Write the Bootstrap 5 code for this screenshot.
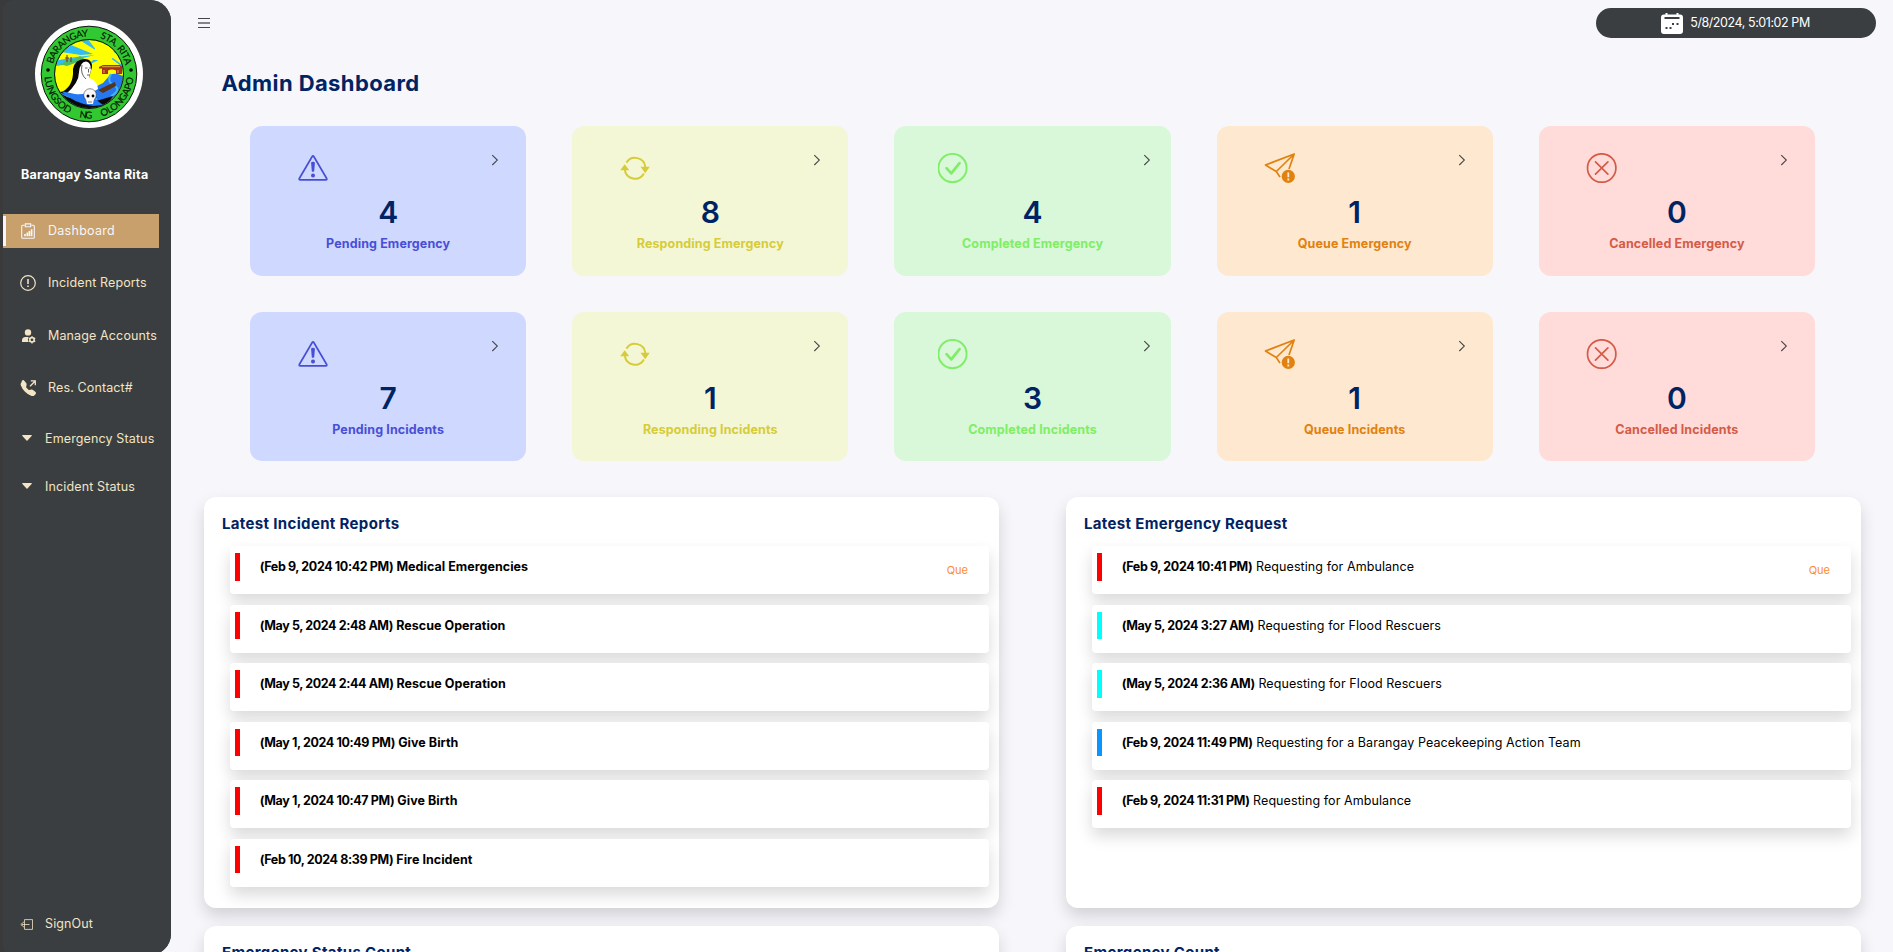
<!DOCTYPE html>
<html lang="en">
<head>
<meta charset="utf-8">
<meta name="viewport" content="width=device-width, initial-scale=1">
<title>Admin Dashboard</title>
<link rel="stylesheet" href="https://cdn.jsdelivr.net/npm/bootstrap@5.3.0/dist/css/bootstrap.min.css">
<style>
  body { font-family: Inter, "Noto Sans", sans-serif; font-size: 12.5px; background: #f6f6fb; color: #000; }
  .app-shell { height: 100vh; }
  .side-rail { width: 171px; height: 955px; padding-left: 3px; background: #3a3a3b; border-radius: 0 21px 21px 0; }
  .side-inner { background: #3a3e41; border-radius: 10px 21px 21px 8px; }
  .seal { width: 108px; height: 108px; margin: 19.5px 0 0 32px; }
  .brand-name { margin: 36.5px 0 29px 18px; color: #fff; font-weight: 700; letter-spacing: .26px; line-height: 21px; }
  .side-link { width: 156px; height: 34px; padding-left: 18px; color: #f3e4c3; letter-spacing: .13px; text-decoration: none; white-space: nowrap; }
  .side-link svg { width: 16px; height: 16px; margin: 0 12px 0 -1px; }
  .side-link.is-active { background: #c7a06b; color: #f6f5fb; padding-left: 15px; letter-spacing: .28px; border: 0 solid; border-left-width: 3px; border-image: linear-gradient(#c7a06b 3px, #f6f5fb 3px 31px, #c7a06b 31px) 1; }
  .side-link.is-group svg { width: 10px; height: 6px; margin: -3px 13px 0 1px; }
  .side-link.sign-out svg { width: 13px; height: 11px; margin: 0 12px 0 -1px; }
  .top-bar { height: 46px; padding: 8px 17px 0 27px; }
  .clock-pill { width: 280px; height: 30px; background: #3a3e41; color: #fff; letter-spacing: -.43px; gap: 7px; padding-right: 1px; }
  .page-title { font-size: 22px; font-weight: 700; letter-spacing: .4px; color: #002363; line-height: 30px; margin: 22px 0 28px 50.5px; }
  .stat-grid { display: grid; grid-template-columns: repeat(5, 276.3px); column-gap: 45.9px; row-gap: 36px; margin-left: 79px; }
  .stat-tile { height: 150px; border-radius: 12px; padding: 27px 28px 0 44px; color: var(--ink); background: var(--fill); }
  .stat-tile.is-low { height: 149px; }
  .stat-icon { width: 38px; height: 30px; }
  .stat-chev { width: 14px; height: 14px; color: #444; margin-right: -4px; }
  .stat-num { font-size: 30px; font-weight: 600; line-height: 40px; color: #002363; margin: 9px -28px 2px -44px; }
  .stat-name { font-weight: 700; line-height: 20px; letter-spacing: .12px; margin: 0 -28px 0 -44px; }
  .t-blue { --fill: #cfd8ff; --ink: #484fd6; }
  .t-yellow { --fill: #f4f7d5; --ink: #d6cc39; }
  .t-green { --fill: #d9f7d9; --ink: #7fee66; }
  .t-orange { --fill: #fee8cf; --ink: #e1810f; }
  .t-red { --fill: #ffdbda; --ink: #d35b47; }
  .t-green .stat-chev { margin-right: -11px; }
  .panel-grid { display: grid; grid-template-columns: 795px 795px; column-gap: 67px; row-gap: 18px; margin: 36px 0 0 33px; }
  .panel-box { height: 411px; background: #fff; border-radius: 12px; padding: 14px 10px 0 26px; box-shadow: 0 8px 16px rgba(0,0,0,.15); }
  .panel-title { font-size: 15px; font-weight: 700; letter-spacing: .34px; line-height: 26px; color: #002363; margin: 0 0 9px -8px; }
  .feed-row { height: 48px; margin-bottom: 10.6px; border-radius: 4px; background: #fff; padding: 7px 21px 0 5px; box-shadow: 0 8px 16px rgba(0,0,0,.15); }
  .feed-mark { width: 4.5px; height: 27.5px; margin-right: 20.2px; background: #f00; }
  .feed-mark.m-cyan { background: #0ff; }
  .feed-mark.m-blue { background: #0a95ff; }
  .feed-text { line-height: 28px; letter-spacing: .08px; }
  .feed-text b { font-weight: 700; letter-spacing: -.38px; }
  .feed-text.is-strong { font-weight: 700; letter-spacing: .04px; }
  .feed-tag { font-size: 11px; line-height: 34px; color: #fd8b33; }
</style>
<script src="https://cdn.jsdelivr.net/npm/bootstrap@5.3.0/dist/js/bootstrap.bundle.min.js"></script>
</head>
<body class="overflow-hidden">

<svg class="d-none" xmlns="http://www.w3.org/2000/svg">
  <symbol id="i-warn" viewBox="0 0 38 30"><path d="M18.2 3.500 5.300 25.500q-.5 1.400.9 1.400h25.600q1.400 0 .9-1.400L19.800 3.500q-.8-1.300-1.600 0z" fill="none" stroke="currentColor" stroke-width="1.700" stroke-linejoin="round"/><path d="M17.100 10.100q0-1.400 1.900-1.400t1.900 1.400l-.7 8.200q-1.200 1-2.400 0z" fill="currentColor"/><circle cx="19" cy="22.500" r="2" fill="currentColor"/></symbol>
  <symbol id="i-sync" viewBox="0 0 38 30"><g fill="none" stroke="currentColor" stroke-width="2"><path d="M10.400 9.600A10.300 10.300 0 0 1 29.300 14"/><path d="M8.800 17a10.300 10.300 0 0 0 19.100 3.400"/></g><path d="M24.500 13.800h9.300l-4.600 6.500zM4.200 17.300l4.500-6 4.600 6z" fill="currentColor"/></symbol>
  <symbol id="i-ok" viewBox="0 0 38 30"><circle cx="14.500" cy="15" r="14.100" fill="none" stroke="currentColor" stroke-width="1.900"/><path d="m8.500 15.200 4.800 5.200 8.200-10.300" fill="none" stroke="currentColor" stroke-width="2.700" stroke-linecap="round" stroke-linejoin="round"/></symbol>
  <symbol id="i-send" viewBox="0 0 38 30"><path d="M33.200 1 4.500 12l10.800 6.500zM15.300 18.500 33.200 1 28 16M15.300 18.500l3.700 5.600" fill="none" stroke="currentColor" stroke-width="1.700" stroke-linejoin="round"/><circle cx="27.300" cy="23.400" r="6.600" fill="currentColor"/><path d="M27.300 19.400v4.800M27.300 25.600v1.900" stroke="#fee8cf" stroke-width="1.800"/></symbol>
  <symbol id="i-x" viewBox="0 0 38 30"><circle cx="18.700" cy="15" r="14.200" fill="none" stroke="currentColor" stroke-width="1.700"/><path d="m12.500 8.800 12.400 12.400M24.900 8.800 12.500 21.200" stroke="currentColor" stroke-width="1.700" stroke-linecap="round"/></symbol>
  <symbol id="i-chev" viewBox="0 0 14 14"><path d="m4.300 2.200 5 4.900-5 4.900" fill="none" stroke="currentColor" stroke-width="1.100"/></symbol>
  <symbol id="i-caret" viewBox="0 0 10 6"><path d="M.7 0h8.600q.9.300.3 1L5.500 5.600q-.5.500-1 0L.4 1q-.6-.7.3-1z" fill="currentColor"/></symbol>
</svg>

<div class="app-shell d-flex">
  <aside class="side-rail flex-shrink-0">
    <div class="side-inner h-100 d-flex flex-column">
      <svg class="seal flex-shrink-0 d-block" viewBox="-54 -54 108 108">
        <defs>
          <clipPath id="disc"><circle r="34"/></clipPath>
          <path id="arcTop" d="M-37.500 0A37.500 37.500 0 0 1 37.500 0"/>
          <path id="arcLow" d="M-44.500 0A44.500 44.500 0 0 0 44.500 0"/>
        </defs>
        <circle r="54" fill="#fff"/>
        <circle r="47.800" fill="#32c832" stroke="#111" stroke-width="1"/>
        <g clip-path="url(#disc)">
          <rect x="-35" y="-35" width="70" height="70" fill="#ff0"/>
          <path d="M-13-36 8-23-2-36zM-36-13-13-17 6-19-18-13-36-7zM-28-22-8-19 4-20-18-29zM13-36 16-27 24-36zM22-22 36-29V-20zM20-17 36-5 32-10 24-16zM4-14-1-9 10-14z" fill="#30bdf5"/>
          <circle cx="15" cy="-21" r="10" fill="#ff0"/>
          <path d="M-34-8-26-11-22-15-14-15-9-18-3-14-5-12-14-11-22-8-26-9z" fill="#4fbd65"/>
          <path d="M-22-19v7M-24-16h4M-18-17v5" stroke="#7a3424" stroke-width="1.100" fill="none"/>
          <path d="M10-7l4-2h17l3 2v1.500h-1V0h-6v-3.500q-4-2-8 0V0h-6v-5.500h-3z" fill="#a8331c"/>
          <path d="M13-7.300h18M15-4v3M29-4v3" stroke="#f0c060" stroke-width=".8"/>
          <path d="M-36 16Q-18 21-2 17L14 9 21 1Q26-2 34 2V36h-70z" fill="#2478f2"/>
          <path d="M22 0Q17 8 26 12 32 16 22 22M-26 22Q-8 28 8 25" stroke="#43b4f5" stroke-width="2" fill="none"/>
          <path d="M9 16Q17 12 26 8L27 12 14 19z" fill="#56341d"/>
          <path d="M-30 19Q-15 14-16-5-14-15-4-15 3-15 3-7L0 4-18 20z" fill="#080808"/>
          <path d="M-23 20Q-10 9-10-2-9-12-3-12.500 2-12 2-4L0 4Q9 7 9 15 0 22-23 20z" fill="#fff"/>
          <path d="M-7-9Q-9 0-3 5M-4-6h2.500M.2-6h1.500M-.5-5v3.500M-2 1h3" stroke="#222" stroke-width=".7" fill="none"/>
          <path d="M-28 20Q-16 27 4 28L24 22Q17 35 2 36-17 36-28 20z" fill="#0a0a0a"/>
          <path d="M-28 17Q-16 29 4 32L14 31 6 25-14 20z" fill="#2478f2"/>
          <circle cx="1" cy="21" r="6.300" fill="#f8f8f8" stroke="#222" stroke-width=".5"/>
          <path d="M-3 25h8l-1 5h-6z" fill="#f8f8f8"/>
          <circle cx="-1" cy="22" r="1.500"/><circle cx="4" cy="22" r="1.400"/><path d="M0 27v2M2 27v2" stroke="#111" stroke-width=".5"/>
        </g>
        <circle r="34.500" fill="none" stroke="#111" stroke-width="1"/>
        <circle cx="-41" cy="-4" r="1.800"/><circle cx="42" cy="-4" r="1.800"/>
        <g font-family="Lato, sans-serif" font-size="9.600" fill="#051505" stroke="#051505" stroke-width=".15">
          <text><textPath href="#arcTop" startOffset="10" textLength="48">BARANGAY</textPath></text>
          <text><textPath href="#arcTop" startOffset="70" textLength="39">STA. RITA</textPath></text>
          <text><textPath href="#arcLow" startOffset="3" textLength="46">LUNGSOD</textPath></text>
          <text><textPath href="#arcLow" startOffset="60" textLength="13">NG</textPath></text>
          <text><textPath href="#arcLow" startOffset="83" textLength="53">OLONGAPO</textPath></text>
        </g>
      </svg>
      <div class="brand-name">Barangay Santa Rita</div>
      <nav class="d-flex flex-column">
        <a class="side-link is-active d-flex align-items-center" href="#">
          <svg viewBox="0 0 16 16" fill="none" stroke="currentColor" stroke-width="1.100"><path d="M4.500 2.200H2.700q-1 0-1 1v11q0 1 1 1h10.600q1 0 1-1v-11q0-1-1-1h-1.800M5.300.9h5.400v2.900H5.300z"/><path d="M5 11v2.200M7.300 9.500v3.700M9.400 8v5.200M11.600 6.300v6.900" stroke-width="1.700"/></svg>Dashboard</a>
        <a class="side-link d-flex align-items-center" style="margin-top:18px" href="#">
          <svg viewBox="0 0 16 16" fill="none" stroke="currentColor"><circle cx="8" cy="8" r="7.300" stroke-width="1.200"/><path d="M8 4v5M8 10.400v1.700" stroke-width="1.600"/></svg>Incident Reports</a>
        <a class="side-link d-flex align-items-center" style="margin-top:19px" href="#">
          <svg viewBox="0 0 16 16" fill="currentColor"><circle cx="8" cy="4.400" r="3.200"/><path d="M2 14v-1.400Q2 9.200 5.500 9h3.200q-1.600 2.300-.3 5z"/><circle cx="12" cy="11.800" r="2.200" fill="none" stroke="currentColor" stroke-width="1.600"/><path d="M12 8.200v1.400M12 14v1.400M8.800 10l1.200.7M14 12.900l1.200.7M8.800 13.600l1.200-.7M14 10.700l1.200-.7" stroke="currentColor" stroke-width="1.300"/></svg>Manage Accounts</a>
        <a class="side-link d-flex align-items-center" style="margin-top:18px" href="#">
          <svg viewBox="0 0 16 16" fill="currentColor"><path d="M1.900.7a1.750 1.750 0 0 1 2.600.2l1.800 2.300c.3.400.4 1 .3 1.500l-.5 2.200a.7.700 0 0 0 .2.600l2.400 2.400a.7.700 0 0 0 .6.200l2.200-.5a1.750 1.750 0 0 1 1.500.3l2.300 1.800c.8.600.9 1.800.2 2.600l-1 1c-.8.800-1.900 1.100-2.900.7a17.600 17.600 0 0 1-6.600-4.200A17.600 17.600 0 0 1 .8 5.200C.4 4.200.7 3 1.500 2.300z"/><path d="M10 6.300 15 1.200M10.800.8h4.500v4.500" fill="none" stroke="currentColor" stroke-width="1.300"/></svg>Res. Contact#</a>
        <a class="side-link is-group d-flex align-items-center" style="margin-top:17px" href="#"><svg><use href="#i-caret"/></svg>Emergency Status</a>
        <a class="side-link is-group d-flex align-items-center" style="margin-top:14px" href="#"><svg><use href="#i-caret"/></svg>Incident Status</a>
      </nav>
      <a class="side-link sign-out d-flex align-items-center mt-auto" style="margin-bottom:14px" href="#">
        <svg viewBox="0 0 13 11" fill="none" stroke="currentColor" stroke-width=".8"><path d="M4.500 2.500V.6h8v9.800h-8V8.500M2 5.500h7.500M4.500 2.500.8 5.500l3.700 3z"/></svg>SignOut</a>
    </div>
  </aside>

  <main class="flex-grow-1">
    <header class="top-bar d-flex justify-content-between align-items-start">
      <svg width="12" height="12" style="margin-top:9px" viewBox="0 0 12 12"><path d="M0 1.500h12M0 10.500h12" stroke="#44464a" stroke-width="1"/><path d="M0 6h12" stroke="#85868b" stroke-width="2"/></svg>
      <div class="clock-pill rounded-pill d-flex align-items-center justify-content-center">
        <svg width="22" height="21" viewBox="0 0 22 21"><path d="M3 1.500h1.500V0h2v1.500h9V0h2v1.500H19q3 0 3 3V18q0 3-3 3H3q-3 0-3-3V4.500q0-3 3-3z" fill="#fff"/><path d="M3.500 5h15" stroke="#3a3e41" stroke-width="2"/><path d="M11 10h2v2h-2zM15.500 10h2v2h-2zM4.500 14h2v2h-2zM8.500 14h2v2h-2z" fill="#3a3e41"/></svg>
        <span>5/8/2024, 5:01:02 PM</span>
      </div>
    </header>

    <h1 class="page-title">Admin Dashboard</h1>

    <section class="stat-grid text-center">
      <div class="stat-tile t-blue"><div class="d-flex justify-content-between"><svg class="stat-icon"><use href="#i-warn"/></svg><svg class="stat-chev"><use href="#i-chev"/></svg></div><div class="stat-num">4</div><div class="stat-name">Pending Emergency</div></div>
      <div class="stat-tile t-yellow"><div class="d-flex justify-content-between"><svg class="stat-icon"><use href="#i-sync"/></svg><svg class="stat-chev"><use href="#i-chev"/></svg></div><div class="stat-num">8</div><div class="stat-name">Responding Emergency</div></div>
      <div class="stat-tile t-green"><div class="d-flex justify-content-between"><svg class="stat-icon"><use href="#i-ok"/></svg><svg class="stat-chev"><use href="#i-chev"/></svg></div><div class="stat-num">4</div><div class="stat-name">Completed Emergency</div></div>
      <div class="stat-tile t-orange"><div class="d-flex justify-content-between"><svg class="stat-icon"><use href="#i-send"/></svg><svg class="stat-chev"><use href="#i-chev"/></svg></div><div class="stat-num">1</div><div class="stat-name">Queue Emergency</div></div>
      <div class="stat-tile t-red"><div class="d-flex justify-content-between"><svg class="stat-icon"><use href="#i-x"/></svg><svg class="stat-chev"><use href="#i-chev"/></svg></div><div class="stat-num">0</div><div class="stat-name">Cancelled Emergency</div></div>

      <div class="stat-tile is-low t-blue"><div class="d-flex justify-content-between"><svg class="stat-icon"><use href="#i-warn"/></svg><svg class="stat-chev"><use href="#i-chev"/></svg></div><div class="stat-num">7</div><div class="stat-name">Pending Incidents</div></div>
      <div class="stat-tile is-low t-yellow"><div class="d-flex justify-content-between"><svg class="stat-icon"><use href="#i-sync"/></svg><svg class="stat-chev"><use href="#i-chev"/></svg></div><div class="stat-num">1</div><div class="stat-name">Responding Incidents</div></div>
      <div class="stat-tile is-low t-green"><div class="d-flex justify-content-between"><svg class="stat-icon"><use href="#i-ok"/></svg><svg class="stat-chev"><use href="#i-chev"/></svg></div><div class="stat-num">3</div><div class="stat-name">Completed Incidents</div></div>
      <div class="stat-tile is-low t-orange"><div class="d-flex justify-content-between"><svg class="stat-icon"><use href="#i-send"/></svg><svg class="stat-chev"><use href="#i-chev"/></svg></div><div class="stat-num">1</div><div class="stat-name">Queue Incidents</div></div>
      <div class="stat-tile is-low t-red"><div class="d-flex justify-content-between"><svg class="stat-icon"><use href="#i-x"/></svg><svg class="stat-chev"><use href="#i-chev"/></svg></div><div class="stat-num">0</div><div class="stat-name">Cancelled Incidents</div></div>
    </section>

    <section class="panel-grid">
      <div class="panel-box">
        <h2 class="panel-title">Latest Incident Reports</h2>
        <div class="feed-row d-flex"><i class="feed-mark"></i><div class="feed-text is-strong flex-grow-1"><b>(Feb 9, 2024 10:42 PM)</b> Medical Emergencies</div><span class="feed-tag">Que</span></div>
        <div class="feed-row d-flex"><i class="feed-mark"></i><div class="feed-text is-strong"><b>(May 5, 2024 2:48 AM)</b> Rescue Operation</div></div>
        <div class="feed-row d-flex"><i class="feed-mark"></i><div class="feed-text is-strong"><b>(May 5, 2024 2:44 AM)</b> Rescue Operation</div></div>
        <div class="feed-row d-flex"><i class="feed-mark"></i><div class="feed-text is-strong"><b>(May 1, 2024 10:49 PM)</b> Give Birth</div></div>
        <div class="feed-row d-flex"><i class="feed-mark"></i><div class="feed-text is-strong"><b>(May 1, 2024 10:47 PM)</b> Give Birth</div></div>
        <div class="feed-row d-flex"><i class="feed-mark"></i><div class="feed-text is-strong"><b>(Feb 10, 2024 8:39 PM)</b> Fire Incident</div></div>
      </div>
      <div class="panel-box">
        <h2 class="panel-title">Latest Emergency Request</h2>
        <div class="feed-row d-flex"><i class="feed-mark"></i><div class="feed-text flex-grow-1"><b>(Feb 9, 2024 10:41 PM)</b> Requesting for Ambulance</div><span class="feed-tag">Que</span></div>
        <div class="feed-row d-flex"><i class="feed-mark m-cyan"></i><div class="feed-text"><b>(May 5, 2024 3:27 AM)</b> Requesting for Flood Rescuers</div></div>
        <div class="feed-row d-flex"><i class="feed-mark m-cyan"></i><div class="feed-text"><b>(May 5, 2024 2:36 AM)</b> Requesting for Flood Rescuers</div></div>
        <div class="feed-row d-flex"><i class="feed-mark m-blue"></i><div class="feed-text"><b>(Feb 9, 2024 11:49 PM)</b> Requesting for a Barangay Peacekeeping Action Team</div></div>
        <div class="feed-row d-flex"><i class="feed-mark"></i><div class="feed-text"><b>(Feb 9, 2024 11:31 PM)</b> Requesting for Ambulance</div></div>
      </div>
      <div class="panel-box"><h2 class="panel-title">Emergency Status Count</h2></div>
      <div class="panel-box"><h2 class="panel-title">Emergency Count</h2></div>
    </section>
  </main>
</div>
</body>
</html>
